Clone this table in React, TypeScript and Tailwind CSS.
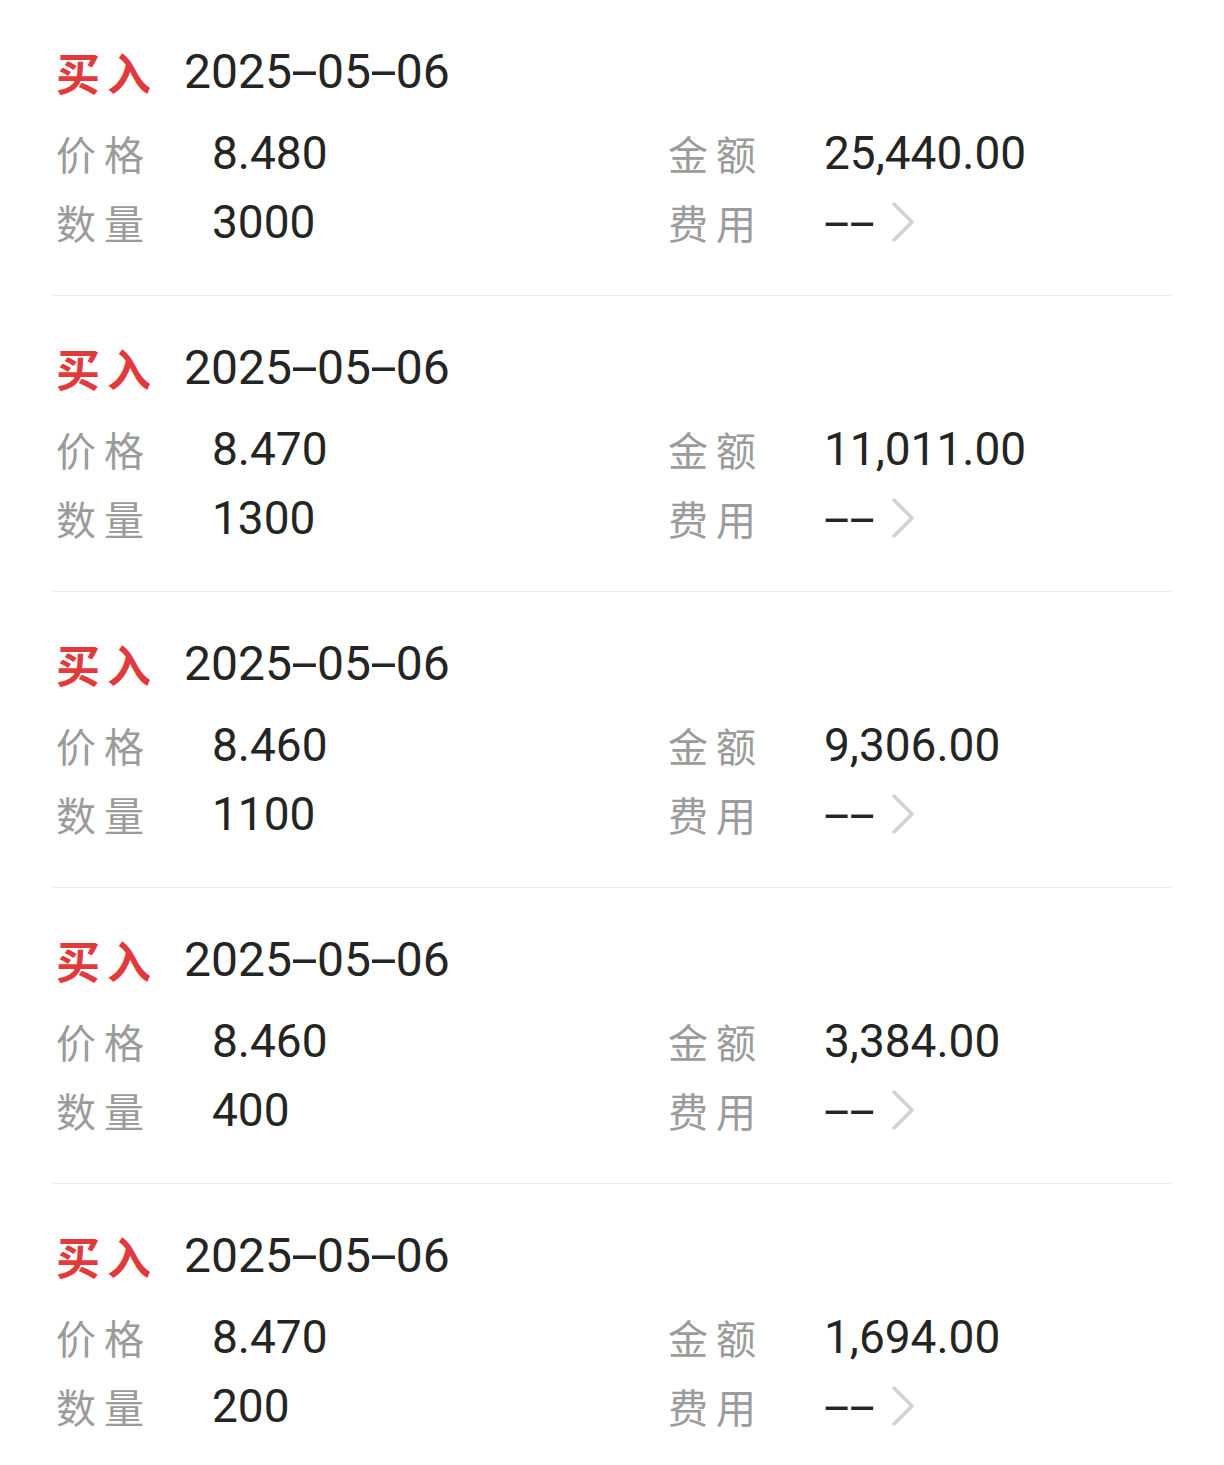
import React from "react";

const records = [
  { date: "2025-05-06", price: "8.480", qty: "3000", amount: "25,440.00" },
  { date: "2025-05-06", price: "8.470", qty: "1300", amount: "11,011.00" },
  { date: "2025-05-06", price: "8.460", qty: "1100", amount: "9,306.00" },
  { date: "2025-05-06", price: "8.460", qty: "400", amount: "3,384.00" },
  { date: "2025-05-06", price: "8.470", qty: "200", amount: "1,694.00" },
];

const cjk = "font-['Noto_Sans_CJK_SC',sans-serif]";
const num = "font-['Roboto','Noto_Sans_CJK_SC',sans-serif]";

function Label({ text }: { text: string }) {
  return (
    <span className={`${cjk} w-[156px] shrink-0 text-[40px] leading-none tracking-[8px] text-[#9b9b9b]`}>
      {text}
    </span>
  );
}

function Chevron() {
  return (
    <svg width="24" height="40" viewBox="0 0 24 40" fill="none" className="shrink-0">
      <polyline points="3,2 21,20 3,38" stroke="#d2d2d2" strokeWidth="3.5" strokeLinejoin="round" strokeLinecap="round" />
    </svg>
  );
}

// the app's font draws wide dashes, so stretch the hyphens
function DateText({ date }: { date: string }) {
  const parts = date.split("-");
  return (
    <span className={`${num} ml-[26px] text-[48px] leading-none text-[#242424]`}>
      {parts.map((p, i) => (
        <React.Fragment key={i}>
          {i > 0 && (
            <span className="inline-block w-[25px] text-center">
              <span className="inline-block scale-x-[2]">-</span>
            </span>
          )}
          {p}
        </React.Fragment>
      ))}
    </span>
  );
}

export default function App() {
  return (
    <div className="min-h-[1465px] bg-white px-[53px]">
      {records.map((r, i) => (
        <div key={i} className="border-b border-[#ececec] pt-[42px] pb-[39px] pl-[3px]">
          <div className="flex h-[60px] items-center">
            <span className={`${cjk} text-[44px] font-bold leading-none tracking-[7px] text-[#e03a3d]`}>买入</span>
            <DateText date={r.date} />
          </div>
          <div className="mt-[16px] grid grid-cols-[612px_1fr]">
            <div className="flex h-[69px] items-center">
              <Label text="价格" />
              <span className={`${num} text-[46px] leading-none text-[#242424]`}>{r.price}</span>
            </div>
            <div className="flex h-[69px] items-center">
              <Label text="金额" />
              <span className={`${num} text-[46px] leading-none text-[#242424]`}>{r.amount}</span>
            </div>
            <div className="flex h-[69px] items-center">
              <Label text="数量" />
              <span className={`${num} text-[46px] leading-none text-[#242424]`}>{r.qty}</span>
            </div>
            <div className="flex h-[69px] items-center">
              <Label text="费用" />
              <span className={`${num} inline-block w-[67px] text-[46px] leading-none text-[#242424]`}>
                <span className="inline-block origin-left scale-x-[2]">--</span>
              </span>
              <Chevron />
            </div>
          </div>
        </div>
      ))}
    </div>
  );
}
